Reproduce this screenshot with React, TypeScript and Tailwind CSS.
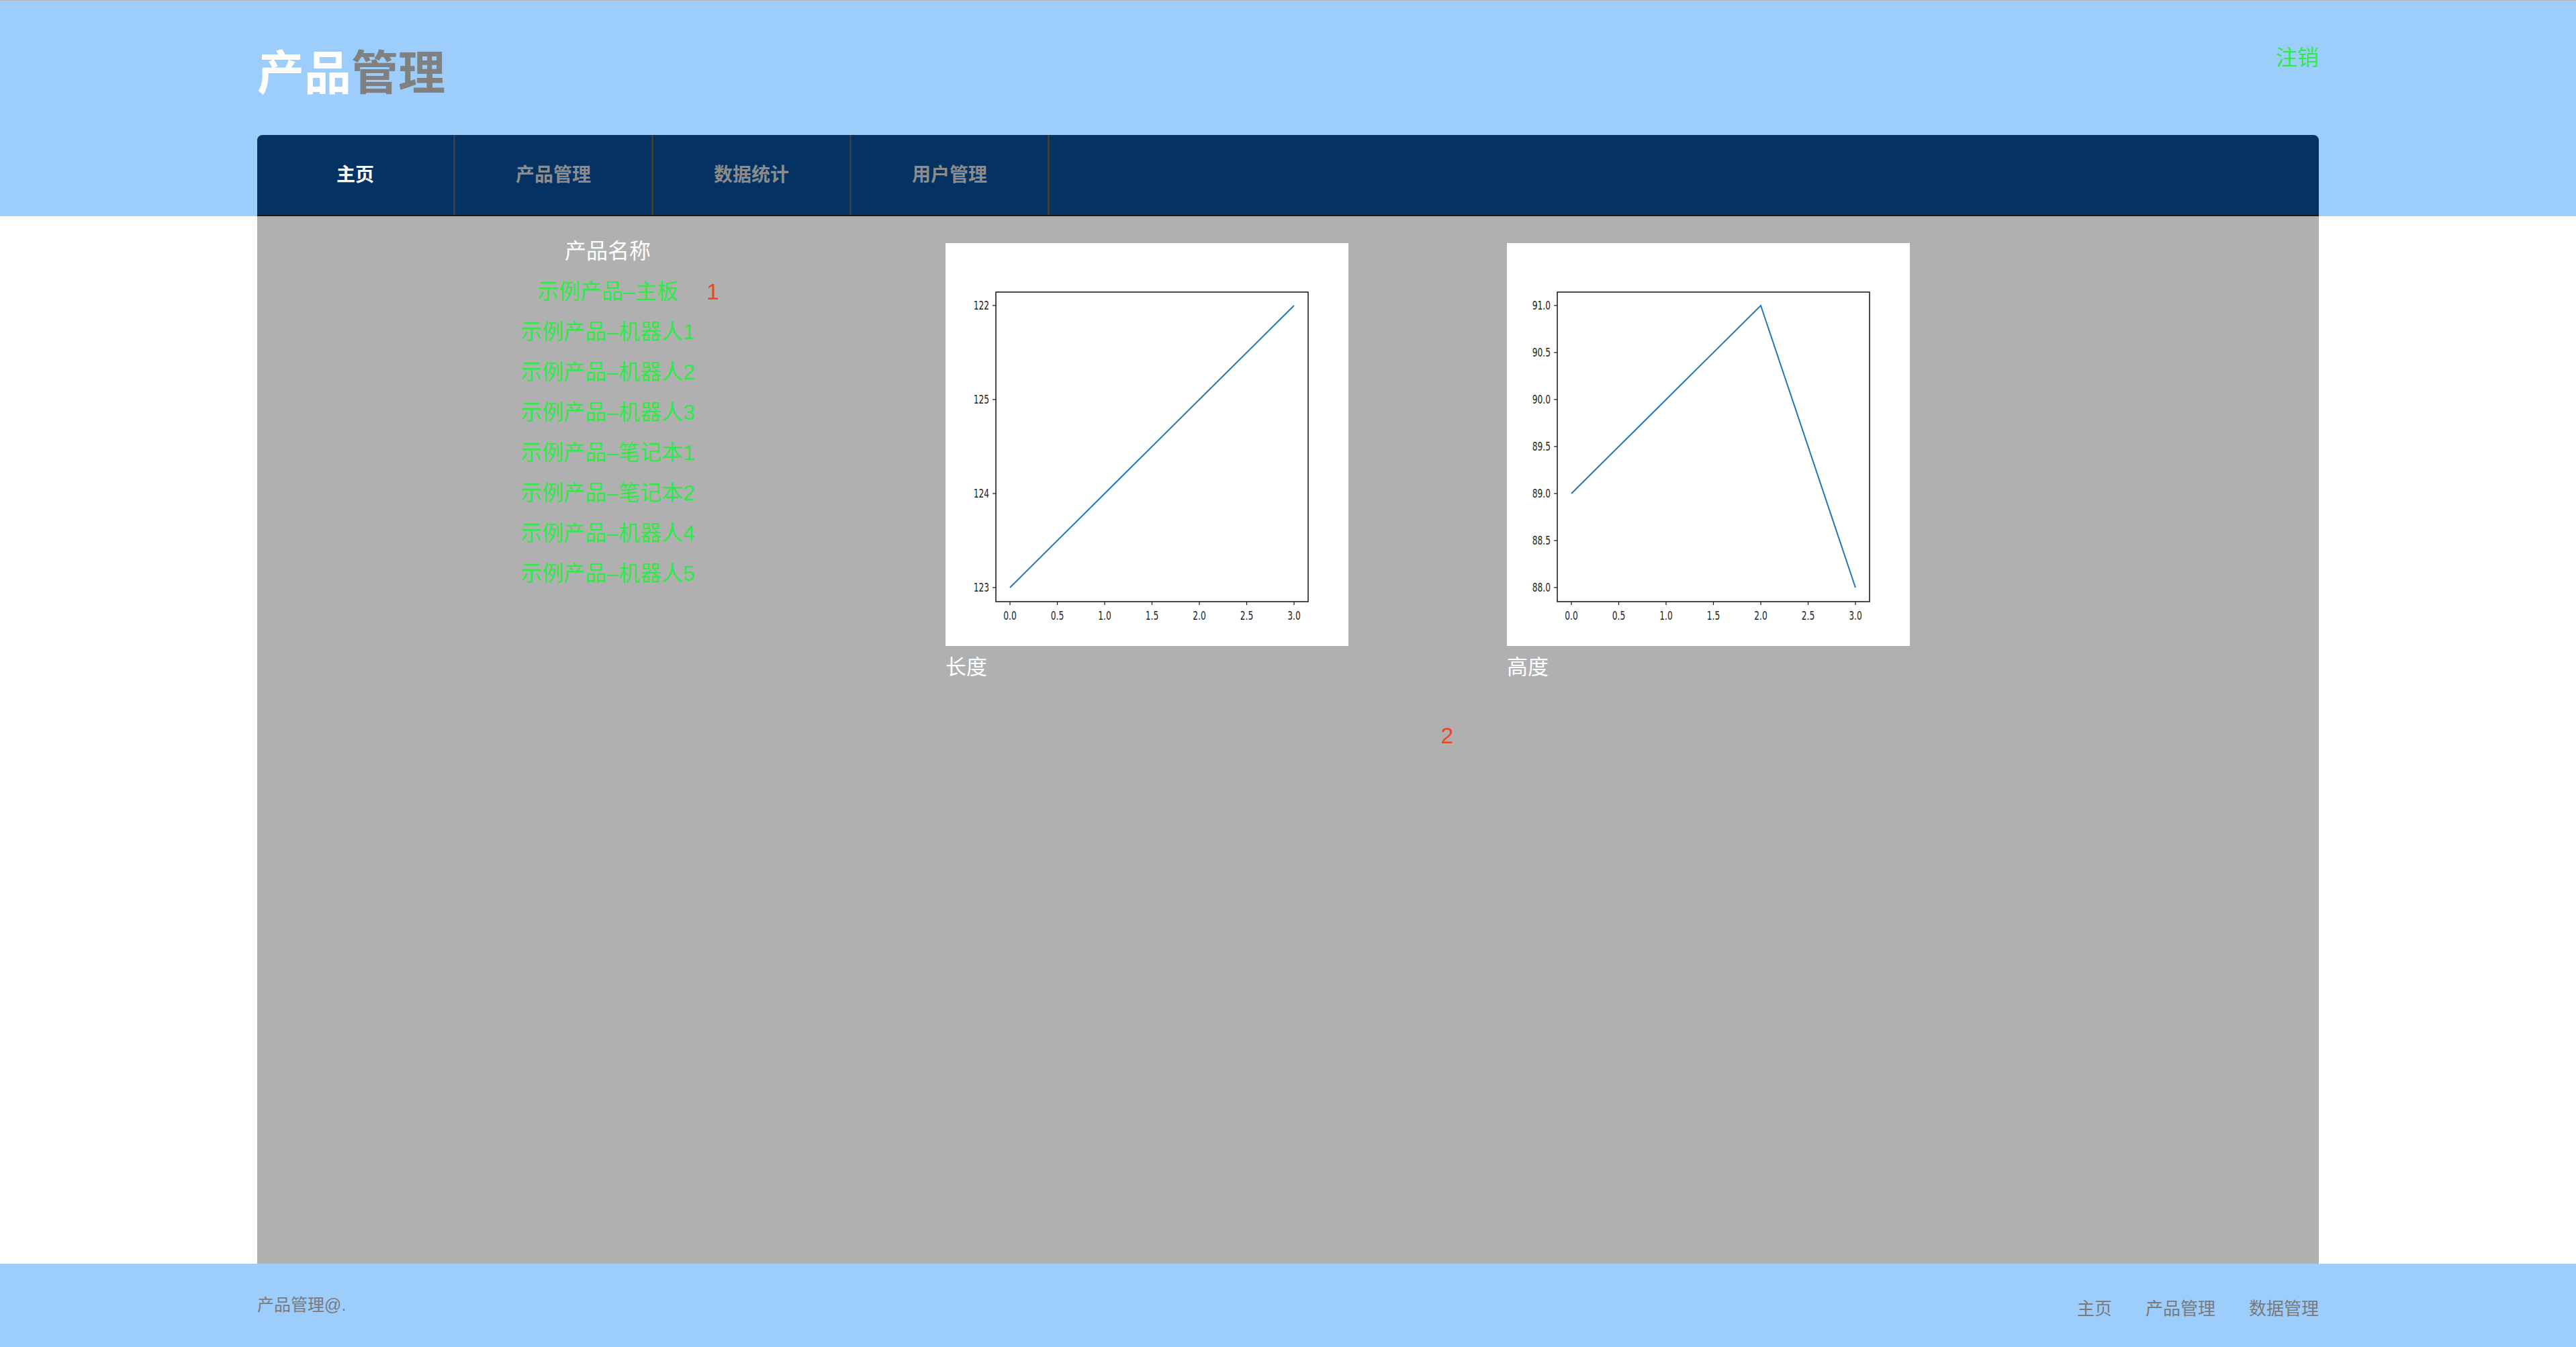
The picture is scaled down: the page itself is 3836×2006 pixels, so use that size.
import React from 'react';

const NAV = ['主页', '产品管理', '数据统计', '用户管理'];
const PRODUCTS = [
  '示例产品–机器人1',
  '示例产品–机器人2',
  '示例产品–机器人3',
  '示例产品–笔记本1',
  '示例产品–笔记本2',
  '示例产品–机器人4',
  '示例产品–机器人5',
];

const XT = ['0.0', '0.5', '1.0', '1.5', '2.0', '2.5', '3.0'];

function Chart({ yLabels, points }: { yLabels: string[]; points: number[] }) {
  // tick positions inside the 600x600 picture
  const ty = (i: number) => 93 + 70 * i;
  const xs = (v: number) => 96 + 141 * v;
  const line = points.map((y, i) => `${xs(i)},${y}`).join(' ');
  return (
    <svg width="600" height="600" viewBox="0 0 600 600" className="block bg-white">
      <rect x="75" y="73" width="465" height="461" fill="none" stroke="#111" strokeWidth="1.5" />
      {yLabels.map((l, i) => {
        const y = yLabels.length === 4 ? 93 + 140 * i : ty(i);
        return (
          <g key={l}>
            <line x1="70" y1={y} x2="75" y2={y} stroke="#111" strokeWidth="1.2" />
            <text
              transform={`translate(65 ${y}) scale(0.72 1)`}
              textAnchor="end"
              dominantBaseline="central"
              fontFamily="DejaVu Sans, sans-serif"
              fontSize="17"
              fill="#222"
            >
              {l}
            </text>
          </g>
        );
      })}
      {XT.map((l, i) => {
        const x = 96 + 70.5 * i;
        return (
          <g key={l}>
            <line x1={x} y1="534" x2={x} y2="539" stroke="#111" strokeWidth="1.2" />
            <text
              transform={`translate(${x} 555) scale(0.72 1)`}
              textAnchor="middle"
              dominantBaseline="central"
              fontFamily="DejaVu Sans, sans-serif"
              fontSize="17"
              fill="#222"
            >
              {l}
            </text>
          </g>
        );
      })}
      <polyline points={line} fill="none" stroke="#1f77b4" strokeWidth="2" />
    </svg>
  );
}

export default function App() {
  return (
    <div className="min-h-screen flex flex-col font-['Liberation_Sans','Noto_Sans_CJK_SC',sans-serif]">
      <header className="bg-[#9dcdfb] border-t border-[#b4b4b4]">
        <div className="mx-auto w-[3070px]">
          <div className="h-[200px] flex justify-between items-start">
            <h1 className="mt-[74px] text-[70px] leading-[70px] font-bold">
              <span className="text-white">产品</span>
              <span className="text-[#808080]">管理</span>
            </h1>
            <a className="mt-[69px] text-[32px] leading-[32px] text-[#2eea46]">注销</a>
          </div>
          <nav className="h-[121px] flex rounded-t-[8px] bg-[#033263] border-b-2 border-[#1a1a1a]">
            {NAV.map((n, i) => (
              <div
                key={n}
                className={`w-[295px] h-full flex items-center justify-center border-r-[3px] border-[#3c3c3c] text-[28px] font-bold ${
                  i === 0 ? 'text-white' : 'text-[#8c8c8c]'
                }`}
              >
                {n}
              </div>
            ))}
          </nav>
        </div>
      </header>

      <main className="flex-1 flex bg-white">
        <div className="mx-auto w-[3070px] bg-[#b0b0b0] flex">
          <div className="ml-[372px] w-[400px] pt-[22px] text-[32px] leading-[60px]">
            <div className="w-[300px] text-center text-white">产品名称</div>
            <div className="flex">
              <div className="w-[300px] text-center text-[#2eea46]">示例产品–主板</div>
              <div className="ml-[-3px] text-[34px] text-[#ee4526]">1</div>
            </div>
            {PRODUCTS.map((p) => (
              <div key={p} className="w-[300px] text-center text-[#2eea46]">
                {p}
              </div>
            ))}
          </div>

          <div className="ml-[253px] pt-[40px]">
            <div className="flex gap-[236px]">
              <div>
                <Chart yLabels={['122', '125', '124', '123']} points={[513, 373, 233, 93]} />
                <div className="mt-[8px] text-[31px] leading-[48px] text-white">长度</div>
              </div>
              <div>
                <Chart
                  yLabels={['91.0', '90.5', '90.0', '89.5', '89.0', '88.5', '88.0']}
                  points={[373, 233, 93, 513]}
                />
                <div className="mt-[8px] text-[31px] leading-[48px] text-white">高度</div>
              </div>
            </div>
            <div className="mt-[57px] w-[1494px] text-center text-[34px] leading-[40px] text-[#ee4526]">2</div>
          </div>
        </div>
      </main>

      <footer className="h-[124px] bg-[#9dcdfb]">
        <div className="mx-auto w-[3070px] h-full flex justify-between items-center">
          <span className="text-[25px] text-[#7a7a7a]">产品管理@.</span>
          <div className="mt-[10px] flex gap-[50px] text-[26px] text-[#7a7a7a]">
            <a>主页</a>
            <a>产品管理</a>
            <a>数据管理</a>
          </div>
        </div>
      </footer>
    </div>
  );
}
